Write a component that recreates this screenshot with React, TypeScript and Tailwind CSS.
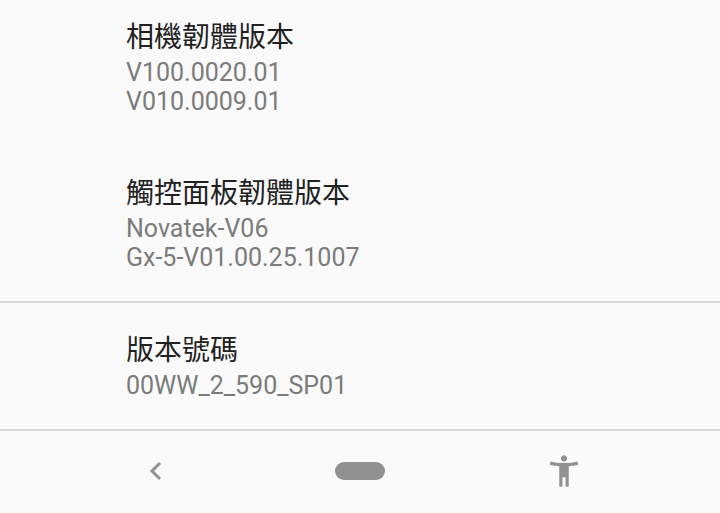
type Entry = { title: string; lines: string[] };

const firmware: Entry[] = [
  { title: "相機韌體版本", lines: ["V100.0020.01", "V010.0009.01"] },
  { title: "觸控面板韌體版本", lines: ["Novatek-V06", "Gx-5-V01.00.25.1007"] },
];

const build: Entry = { title: "版本號碼", lines: ["00WW_2_590_SP01"] };

export default function App() {
  return (
    <div className="min-h-screen flex flex-col bg-[#fafafa] font-[Roboto,'Noto_Sans_CJK_TC',sans-serif]">
      <main>
        <section className="flex flex-col gap-[58px] border-b-2 border-[#d9d9d9] pt-[18px] pb-[29px] pl-[126px] pr-6">
          {firmware.map((entry) => (
            <Preference key={entry.title} {...entry} />
          ))}
        </section>
        <section className="border-b-2 border-[#d9d9d9] pt-7 pb-[29px] pl-[126px] pr-6">
          <Preference {...build} />
        </section>
      </main>
      <NavBar />
    </div>
  );
}

function Preference({ title, lines }: Entry) {
  return (
    <div>
      <h2 className="text-[28px] leading-[40px] text-[#212121]">{title}</h2>
      {lines.map((line) => (
        <p key={line} className="text-[25px] leading-[29px] text-[#7b7b7b]">{line}</p>
      ))}
    </div>
  );
}

function NavBar() {
  return (
    <nav className="grid grid-cols-3 items-center px-[54px] py-5 text-[#919191]">
      <button type="button" aria-label="返回" className="justify-self-center">
        <svg width="40" height="40" viewBox="0 0 40 40" fill="none" stroke="currentColor" strokeWidth="3">
          <path d="M24 12 16 20l8 8" />
        </svg>
      </button>
      <button type="button" aria-label="主畫面" className="h-[18px] w-[50px] justify-self-center rounded-full bg-[#919191]" />
      <button type="button" aria-label="無障礙功能" className="justify-self-center">
        <svg width="38" height="38" viewBox="0 0 24 24" fill="currentColor">
          <path d="M20.5 6c-2.61.7-5.67 1-8.5 1s-5.89-.3-8.5-1L3 8c1.86.5 4 .83 6 1v13h2v-6h2v6h2V9c2-.17 4.14-.5 6-1l-.5-2zM12 6c1.1 0 2-.9 2-2s-.9-2-2-2-2 .9-2 2 .9 2 2 2z" />
        </svg>
      </button>
    </nav>
  );
}
